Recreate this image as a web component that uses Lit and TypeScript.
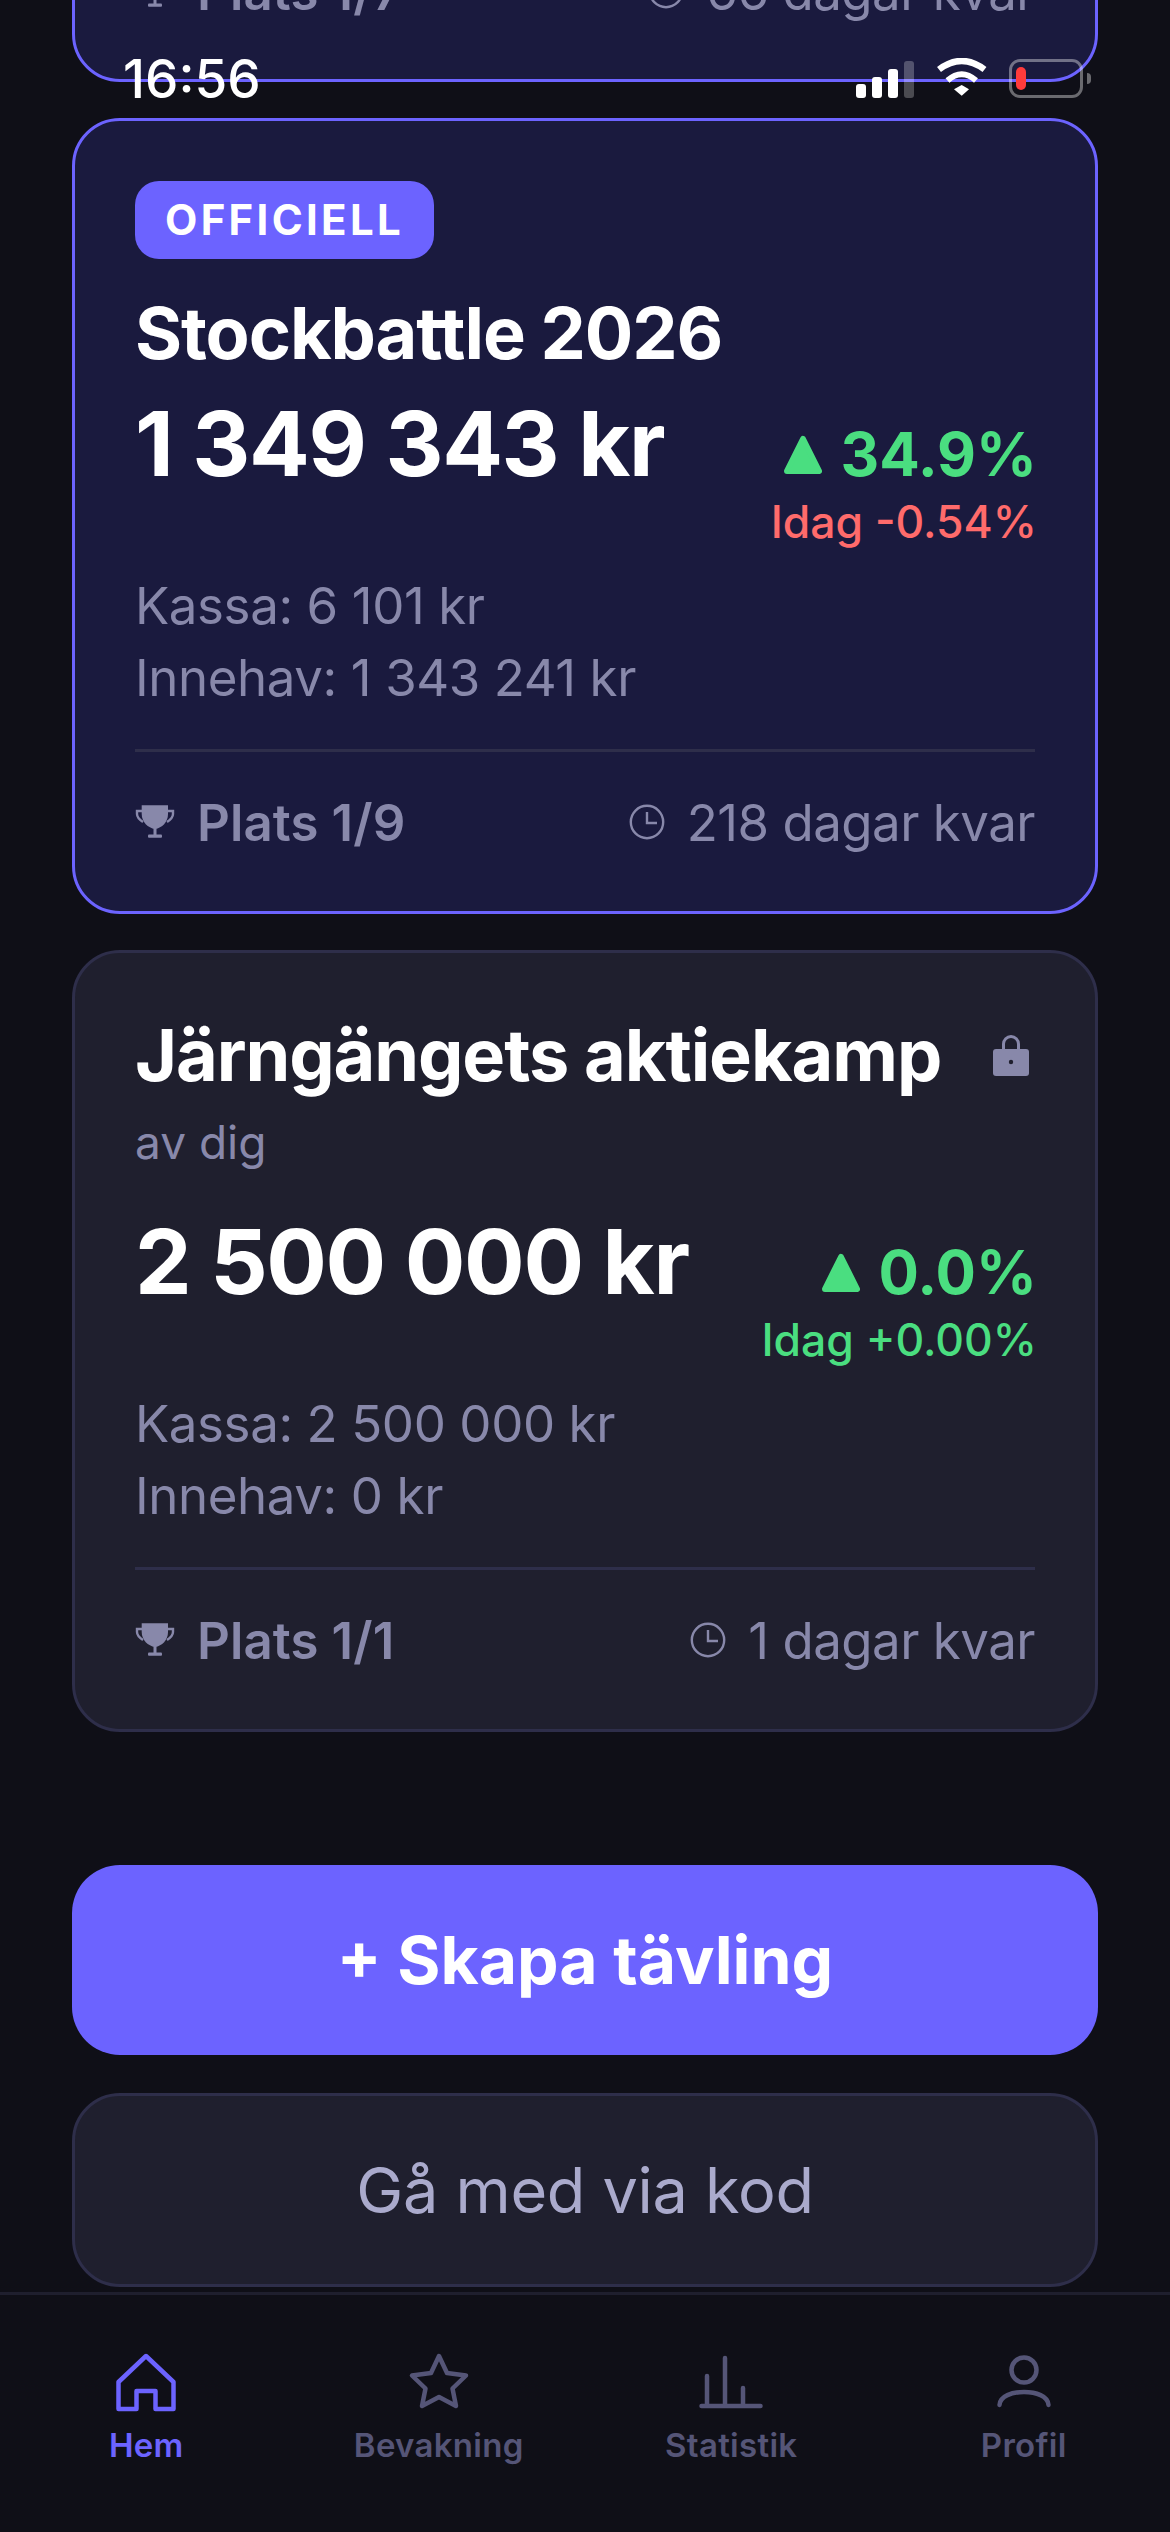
import { LitElement, css, html, nothing, svg } from "lit";
import { customElement } from "lit/decorators.js";

type Contest = {
  name: string;
  by?: string;
  official?: boolean;
  locked?: boolean;
  value: string;
  pct: string;
  today: string;
  todayUp: boolean;
  cash: string;
  holdings: string;
  place: string;
  left: string;
};

const contests: Contest[] = [
  {
    name: "Stockbattle 2026",
    official: true,
    value: "1 349 343 kr",
    pct: "34.9%",
    today: "Idag -0.54%",
    todayUp: false,
    cash: "Kassa: 6 101 kr",
    holdings: "Innehav: 1 343 241 kr",
    place: "Plats 1/9",
    left: "218 dagar kvar",
  },
  {
    name: "Järngängets aktiekamp",
    by: "av dig",
    locked: true,
    value: "2 500 000 kr",
    pct: "0.0%",
    today: "Idag +0.00%",
    todayUp: true,
    cash: "Kassa: 2 500 000 kr",
    holdings: "Innehav: 0 kr",
    place: "Plats 1/1",
    left: "1 dagar kvar",
  },
];

const trophy = html`<svg class="trophy" viewBox="0 0 40 36">
  <path d="M6.7 1.3H33V10C33 18 27 24 20 25C13 24 6.7 18 6.7 10Z" fill="currentColor" />
  <path d="M7 7H2V10C2 14 5 16 8 18M33 7H38V10C38 14 35 16 32 18" fill="none" stroke="currentColor" stroke-width="2.4" />
  <rect x="18.5" y="24" width="3" height="8" fill="currentColor" />
  <rect x="13" y="30.5" width="14" height="3.2" rx="1" fill="currentColor" />
</svg>`;

const clock = html`<svg class="clock" viewBox="0 0 36 36" fill="none" stroke="currentColor" stroke-width="2.4">
  <circle cx="18" cy="18" r="16.2" />
  <path d="M18 8V19H28" />
</svg>`;

const lock = html`<svg class="lock" viewBox="0 0 36 41">
  <path d="M10.5 15V9A7.5 7.5 0 0 1 25.5 9V15" fill="none" stroke="currentColor" stroke-width="3" />
  <rect y="14" width="36" height="27" rx="3" fill="currentColor" />
  <circle cx="18" cy="27" r="2.2" fill="#1f1f2e" />
</svg>`;

const tabs = [
  {
    label: "Hem",
    icon: svg`<path d="M8.5 36L36 10L63.5 36V63H45.5V45H26.5V63H8.5Z" />`,
  },
  {
    label: "Bevakning",
    icon: svg`<path d="M36 10L44 27L63 29.5L49.5 42.5L53 60L36 51L19 60L22.5 42.5L9 29.5L28 27Z" />`,
  },
  {
    label: "Statistik",
    icon: svg`<path d="M6.5 60H65.5M12 60V30M30 60V12M48 60V42" />`,
  },
  {
    label: "Profil",
    icon: svg`<circle cx="36" cy="24" r="12.5" /><path d="M11.5 59C12 50 24 46 36 46C48 46 60 50 60.5 59" />`,
  },
];

@customElement("app-root")
export class AppRoot extends LitElement {
  static styles = css`
    :host {
      position: relative;
      width: 1170px;
      height: 2532px;
      overflow: hidden;
      display: flex;
      flex-direction: column;
      background: #0f0f17;
      color: #fff;
      font-family: Inter, "Noto Sans", sans-serif;
    }

    .status {
      position: absolute;
      top: 58px;
      left: 0;
      right: 0;
      height: 40px;
      display: flex;
      align-items: center;
      padding: 0 87px 0 123px;
    }

    .time {
      font-size: 53px;
      font-weight: 500;
      line-height: 40px;
      flex: 1;
      margin-top: 2px;
    }

    .signal {
      display: flex;
      align-items: flex-end;
      gap: 6px;
      height: 37px;
      margin-top: 2px;
    }

    .signal i {
      display: block;
      width: 10px;
      border-radius: 3px;
      background: #fff;
    }

    .signal i.off {
      background: rgba(255, 255, 255, 0.25);
    }

    .wifi {
      width: 52px;
      height: 40px;
      margin-left: 22px;
    }

    .battery {
      position: relative;
      box-sizing: border-box;
      width: 74px;
      height: 39px;
      margin-left: 21px;
      padding: 5px 4px;
      border: 3px solid rgba(255, 255, 255, 0.38);
      border-radius: 11px;
    }

    .battery i {
      display: block;
      width: 10px;
      height: 23px;
      border-radius: 5px;
      background: #ff3b3b;
    }

    .battery::after {
      content: "";
      position: absolute;
      right: -11px;
      top: 11px;
      width: 4px;
      height: 11px;
      border-radius: 0 4px 4px 0;
      background: rgba(255, 255, 255, 0.38);
    }

    .scroll {
      flex: 1;
      min-height: 0;
      overflow: hidden;
      box-sizing: border-box;
      padding: 0 72px;
    }

    .card {
      box-sizing: border-box;
      padding: 60px;
      border: 3px solid #2e2e4a;
      border-radius: 48px;
      background: #1f1f2e;
      margin-bottom: 36px;
    }

    .card.official {
      border-color: #6c63ff;
      background: #1a1a3e;
    }

    .card.stub {
      margin-top: -82px;
      padding-top: 0;
      padding-bottom: 59px;
    }

    .badge {
      display: inline-block;
      height: 78px;
      padding: 0 30px;
      border-radius: 24px;
      background: #6c63ff;
      font-size: 42px;
      font-weight: 700;
      line-height: 78px;
      letter-spacing: 3.3px;
      vertical-align: top;
    }

    .badge-row {
      height: 78px;
      margin-bottom: 32px;
    }

    .title-row {
      display: flex;
      align-items: center;
      justify-content: space-between;
    }

    .title {
      font-size: 72px;
      font-weight: 700;
      line-height: 84px;
      letter-spacing: -1.1px;
    }

    .lock {
      width: 36px;
      height: 41px;
      margin-right: 6px;
      color: #8888aa;
    }

    .by {
      margin-top: 16px;
      margin-bottom: 40px;
      font-size: 46px;
      line-height: 58px;
      color: #8888aa;
    }

    .value-row {
      display: flex;
      justify-content: space-between;
      margin-top: 18px;
    }

    .value {
      font-size: 90px;
      font-weight: 700;
      line-height: 102px;
      letter-spacing: -1.4px;
    }

    .change {
      padding-top: 25px;
      margin-right: -2px;
      text-align: right;
    }

    .pct {
      display: flex;
      align-items: center;
      justify-content: flex-end;
      gap: 19px;
      font-size: 60px;
      font-weight: 700;
      line-height: 72px;
      color: #4ade80;
    }

    .pct svg {
      width: 38px;
      height: 39px;
    }

    .today {
      margin-top: 6px;
      font-size: 44.5px;
      font-weight: 500;
      line-height: 52px;
    }

    .up {
      color: #4ade80;
    }

    .down {
      color: #ff6b6b;
    }

    .metrics {
      margin-top: 22px;
      font-size: 51px;
      line-height: 72px;
      letter-spacing: -0.4px;
      color: #8888aa;
    }

    .divider {
      height: 3px;
      margin-top: 35px;
      background: #2e2e4a;
    }

    .footer {
      display: flex;
      align-items: center;
      justify-content: space-between;
      height: 58px;
      margin-top: 41px;
      font-size: 51px;
      letter-spacing: -0.5px;
      color: #8888aa;
    }

    .side {
      display: flex;
      align-items: center;
      gap: 22px;
    }

    .place {
      font-weight: 600;
      letter-spacing: 0.1px;
    }

    .trophy {
      width: 40px;
      height: 36px;
    }

    .clock {
      width: 36px;
      height: 36px;
    }

    .actions {
      margin-top: 133px;
      display: flex;
      flex-direction: column;
      gap: 38px;
    }

    .btn {
      display: flex;
      align-items: center;
      justify-content: center;
      box-sizing: border-box;
      border-radius: 48px;
    }

    .btn.primary {
      height: 190px;
      background: #6c63ff;
      font-size: 66px;
      font-weight: 700;
    }

    .btn.ghost {
      height: 194px;
      border: 3px solid #2e2e4a;
      background: #1f1f2e;
      font-size: 63px;
      letter-spacing: -0.3px;
      color: #aaaacc;
    }

    .tabbar {
      box-sizing: border-box;
      height: 240px;
      flex: none;
      display: flex;
      padding-top: 51px;
      border-top: 3px solid #1f1f2e;
      background: #0f0f17;
    }

    .tab {
      flex: 1;
      display: flex;
      flex-direction: column;
      align-items: center;
      color: #555577;
    }

    .tab.active {
      color: #6c63ff;
    }

    .tab svg {
      width: 72px;
      height: 72px;
      fill: none;
      stroke: currentColor;
      stroke-width: 4.5;
      stroke-linecap: round;
      stroke-linejoin: round;
    }

    .tab span {
      margin-top: 7px;
      font-size: 33px;
      font-weight: 600;
      line-height: 40px;
      letter-spacing: 0.3px;
    }
  `;

  private renderFooter(place: string, left: string) {
    return html`<div class="footer">
      <div class="side place">${trophy}<span>${place}</span></div>
      <div class="side">${clock}<span>${left}</span></div>
    </div>`;
  }

  private renderCard(c: Contest) {
    return html`<section class="card ${c.official ? "official" : ""}">
      ${c.official
        ? html`<div class="badge-row"><span class="badge">OFFICIELL</span></div>`
        : nothing}
      <div class="title-row">
        <div class="title">${c.name}</div>
        ${c.locked ? lock : nothing}
      </div>
      ${c.by ? html`<div class="by">${c.by}</div>` : nothing}
      <div class="value-row">
        <div class="value">${c.value}</div>
        <div class="change">
          <div class="pct">
            <svg viewBox="0 0 38 39">
              <path d="M19 4L35 36H3Z" fill="currentColor" stroke="currentColor" stroke-width="6" stroke-linejoin="round" />
            </svg>
            <span>${c.pct}</span>
          </div>
          <div class="today ${c.todayUp ? "up" : "down"}">${c.today}</div>
        </div>
      </div>
      <div class="metrics">
        <div>${c.cash}</div>
        <div>${c.holdings}</div>
      </div>
      <div class="divider"></div>
      ${this.renderFooter(c.place, c.left)}
    </section>`;
  }

  render() {
    return html`<main class="scroll">
        <section class="card official stub">
          ${this.renderFooter("Plats 1/7", "66 dagar kvar")}
        </section>
        ${contests.map((c) => this.renderCard(c))}
        <div class="actions">
          <div class="btn primary">+ Skapa tävling</div>
          <div class="btn ghost">Gå med via kod</div>
        </div>
      </main>

      <nav class="tabbar">
        ${tabs.map(
          (t, i) => html`<div class="tab ${i === 0 ? "active" : ""}">
            <svg viewBox="0 0 72 72">${t.icon}</svg>
            <span>${t.label}</span>
          </div>`
        )}
      </nav>

      <div class="status">
        <div class="time">16:56</div>
        <div class="signal">
          <i style="height:14px"></i>
          <i style="height:21px"></i>
          <i style="height:29px"></i>
          <i class="off" style="height:37px"></i>
        </div>
        <svg class="wifi" viewBox="0 0 52 40" fill="none" stroke="#fff">
          <path d="M3 11.5Q25.7 -5.5 48.5 11.5" stroke-width="6.5" />
          <path d="M11.5 22.5Q25.7 10 40 22.5" stroke-width="6" />
          <path d="M18 31.3L25.7 27L33 31.3L25.7 37.7Z" fill="#fff" stroke="none" />
        </svg>
        <div class="battery"><i></i></div>
      </div>`;
  }
}

declare global {
  interface HTMLElementTagNameMap {
    "app-root": AppRoot;
  }
}
